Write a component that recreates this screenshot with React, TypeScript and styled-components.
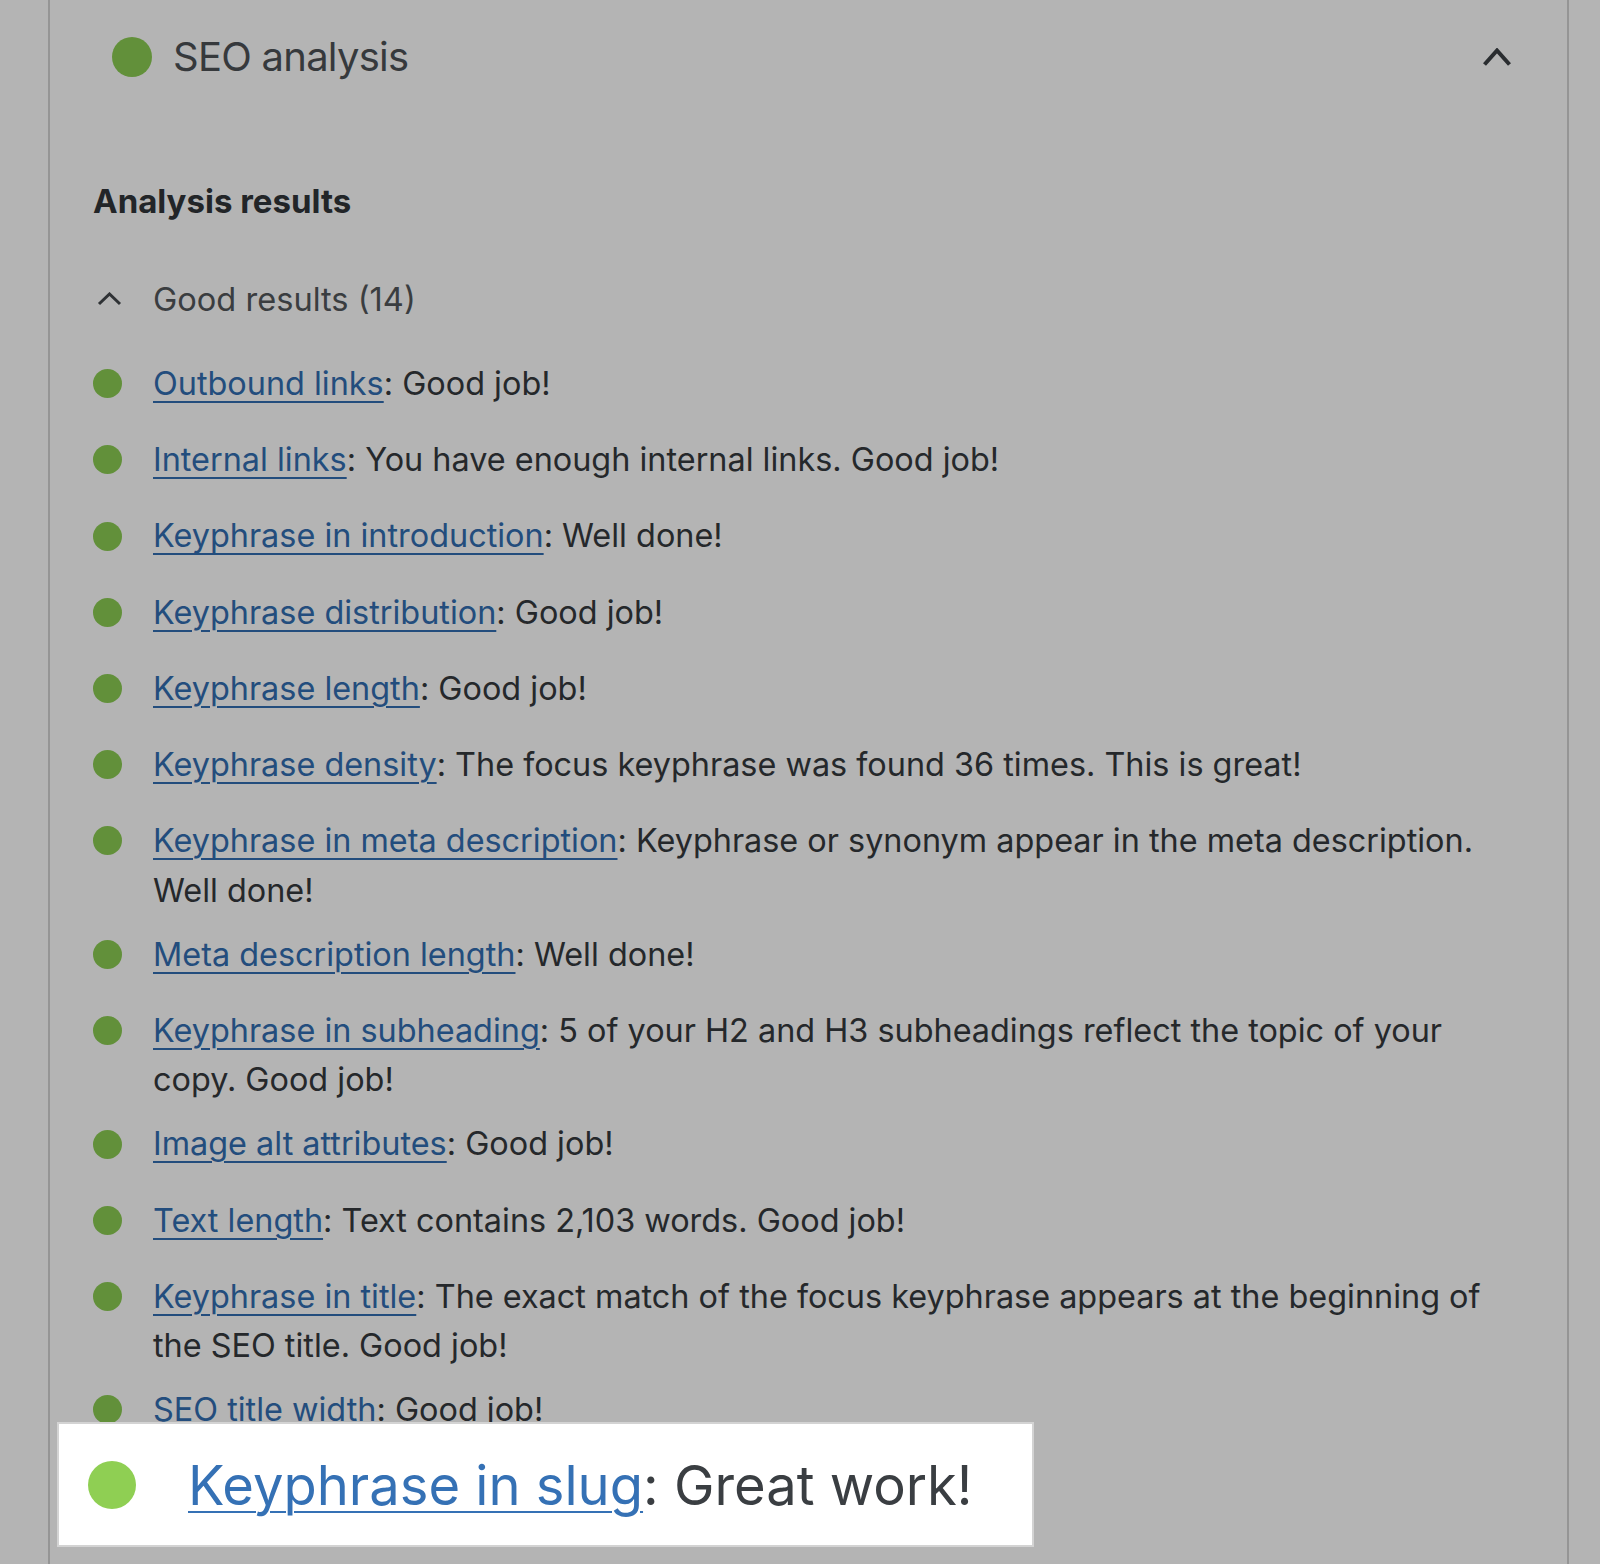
import React from "react";
import styled, { createGlobalStyle } from "styled-components";

const Global = createGlobalStyle`
  html, body { margin: 0; padding: 0; }
  body {
    background: #b4b4b4;
    font-family: Inter, "Noto Sans", "Liberation Sans", sans-serif;
    -webkit-font-smoothing: antialiased;
  }
`;

const Page = styled.div`
  position: relative;
  width: 1600px;
  min-height: 1564px;
  overflow: hidden;
`;

const Panel = styled.section`
  margin-left: 48px;
  width: 1517px;
  min-height: 1564px;
  border-left: 2px solid #959595;
  border-right: 2px solid #959595;
`;

const Header = styled.header`
  height: 114px;
  display: flex;
  align-items: center;
  padding: 0 55px 0 62px;
`;

const Dot = styled.span<{ $size: number; $color: string }>`
  flex: none;
  width: ${(p) => p.$size}px;
  height: ${(p) => p.$size}px;
  border-radius: 50%;
  background: ${(p) => p.$color};
`;

const HeaderTitle = styled.h2`
  margin: 0 0 0 21px;
  flex: 1;
  font-size: 40px;
  font-weight: 400;
  letter-spacing: -0.75px;
  color: #36393c;
  line-height: 48px;
`;

const Body = styled.div`
  padding: 0 56px 0 43px;
`;

const SectionTitle = styled.h3`
  margin: 63px 0 0;
  font-size: 33px;
  font-weight: 700;
  line-height: 48px;
  color: #222528;
`;

const GroupToggle = styled.div`
  margin-top: 49px;
  display: flex;
  align-items: center;
  height: 49px;
  font-size: 32.6px;
  color: #3a3d40;
`;

const ToggleIcon = styled.span`
  flex: none;
  width: 60px;
  display: flex;
  align-items: center;
  padding-left: 4px;
  box-sizing: border-box;
`;

const ResultList = styled.ul`
  list-style: none;
  margin: 36px 0 0;
  padding: 0;
  display: flex;
  flex-direction: column;
  gap: 14.5px;
`;

const ResultItem = styled.li`
  display: flex;
  align-items: flex-start;
  min-height: 61.7px;
`;

const Marker = styled.span`
  flex: none;
  width: 60px;
  height: 49.5px;
  display: flex;
  align-items: center;
`;

const ResultText = styled.p`
  margin: 0;
  flex: 1;
  font-size: 32.4px;
  line-height: 49.5px;
  color: #25282b;
`;

const Link = styled.a<{ $color: string }>`
  color: ${(p) => p.$color};
  text-decoration: underline;
  text-decoration-thickness: 2px;
  text-underline-offset: 6px;
`;

const Callout = styled.div`
  position: absolute;
  left: 57px;
  top: 1422px;
  width: 977px;
  height: 125px;
  box-sizing: border-box;
  background: #ffffff;
  border: 2px solid #d3d3d3;
  display: flex;
  align-items: center;
  padding-left: 29px;
`;

const CalloutText = styled.p`
  margin: 0 0 0 52px;
  font-size: 54.3px;
  line-height: 66px;
  color: #3a3e42;
  white-space: nowrap;
`;

const results: { link: string; text: string }[] = [
  { link: "Outbound links", text: "Good job!" },
  { link: "Internal links", text: "You have enough internal links. Good job!" },
  { link: "Keyphrase in introduction", text: "Well done!" },
  { link: "Keyphrase distribution", text: "Good job!" },
  { link: "Keyphrase length", text: "Good job!" },
  { link: "Keyphrase density", text: "The focus keyphrase was found 36 times. This is great!" },
  { link: "Keyphrase in meta description", text: "Keyphrase or synonym appear in the meta description. Well done!" },
  { link: "Meta description length", text: "Well done!" },
  { link: "Keyphrase in subheading", text: "5 of your H2 and H3 subheadings reflect the topic of your copy. Good job!" },
  { link: "Image alt attributes", text: "Good job!" },
  { link: "Text length", text: "Text contains 2,103 words. Good job!" },
  { link: "Keyphrase in title", text: "The exact match of the focus keyphrase appears at the beginning of the SEO title. Good job!" },
  { link: "SEO title width", text: "Good job!" },
  { link: "Keyphrase in slug", text: "Great work!" },
];

const ChevronUp = ({ w, h, sw, color }: { w: number; h: number; sw: number; color: string }) => (
  <svg width={w} height={h} viewBox={`0 0 ${w} ${h}`} fill="none">
    <polyline
      points={`${sw / 2 + 0.5},${h - sw / 2 - 0.5} ${w / 2},${sw / 2 + 0.5} ${w - sw / 2 - 0.5},${h - sw / 2 - 0.5}`}
      stroke={color}
      strokeWidth={sw}
      strokeLinejoin="miter"
      strokeLinecap="butt"
    />
  </svg>
);

export default function App() {
  return (
    <Page>
      <Global />
      <Panel>
        <Header>
          <Dot $size={40} $color="#62903a" />
          <HeaderTitle>SEO analysis</HeaderTitle>
          <ChevronUp w={30} h={19} sw={4} color="#2a2d30" />
        </Header>
        <Body>
          <SectionTitle>Analysis results</SectionTitle>
          <GroupToggle>
            <ToggleIcon>
              <ChevronUp w={25} h={14} sw={3} color="#2f3235" />
            </ToggleIcon>
            Good results (14)
          </GroupToggle>
          <ResultList>
            {results.map((r) => (
              <ResultItem key={r.link}>
                <Marker>
                  <Dot $size={29} $color="#62903a" />
                </Marker>
                <ResultText>
                  <Link href="#" $color="#234d7d">{r.link}</Link>: {r.text}
                </ResultText>
              </ResultItem>
            ))}
          </ResultList>
        </Body>
      </Panel>
      <Callout>
        <Dot $size={48} $color="#8fcf53" />
        <CalloutText>
          <Link href="#" $color="#3571b5">Keyphrase in slug</Link>: Great work!
        </CalloutText>
      </Callout>
    </Page>
  );
}
